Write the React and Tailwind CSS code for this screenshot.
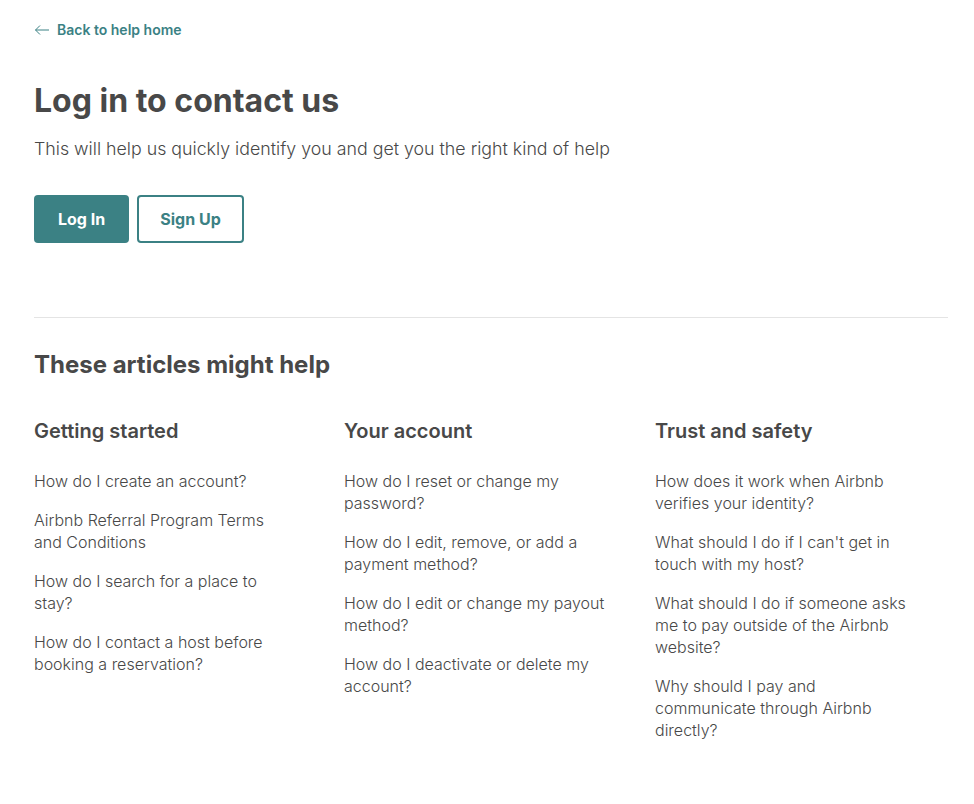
import React from 'react';

const columns = [
  {
    title: 'Getting started',
    links: [
      'How do I create an account?',
      'Airbnb Referral Program Terms and Conditions',
      'How do I search for a place to stay?',
      'How do I contact a host before booking a reservation?',
    ],
  },
  {
    title: 'Your account',
    links: [
      'How do I reset or change my password?',
      'How do I edit, remove, or add a payment method?',
      'How do I edit or change my payout method?',
      'How do I deactivate or delete my account?',
    ],
  },
  {
    title: 'Trust and safety',
    links: [
      'How does it work when Airbnb verifies your identity?',
      "What should I do if I can't get in touch with my host?",
      'What should I do if someone asks me to pay outside of the Airbnb website?',
      'Why should I pay and communicate through Airbnb directly?',
    ],
  },
];

const ArrowLeft = () => (
  <svg width="16" height="12" viewBox="0 0 16 12" fill="none" stroke="currentColor" strokeWidth="1">
    <path d="M15 6H1.5M6 1.5L1.5 6L6 10.5" />
  </svg>
);

export default function App() {
  return (
    <div
      className="min-h-screen bg-white text-[#484848] pl-[34px] pr-[26px] pt-[20px] pb-10"
      style={{ fontFamily: 'Inter, "Open Sans", sans-serif' }}
    >
      {/* back link */}
      <a href="#" className="flex items-center gap-[7px] text-[14px] leading-[20px] font-semibold text-[#3b8184]">
        <ArrowLeft />
        Back to help home
      </a>

      <h1 className="mt-[41px] text-[32px] leading-[40px] font-bold">Log in to contact us</h1>
      <p className="mt-[16px] text-[17.8px] leading-[24px] font-light">
        This will help us quickly identify you and get you the right kind of help
      </p>

      <div className="mt-[34px] flex gap-[8px]">
        <button className="h-[48px] w-[95px] rounded-[4px] bg-[#3b8184] text-white text-[16px] font-bold">
          Log In
        </button>
        <button className="h-[48px] w-[107px] rounded-[4px] border-2 border-[#3b8184] bg-white text-[#3b8184] text-[16px] font-bold">
          Sign Up
        </button>
      </div>

      <hr className="mt-[74px] border-t border-[#e4e4e4]" />

      <h2 className="mt-[32px] text-[24px] leading-[30px] font-bold">These articles might help</h2>

      <div className="mt-[38px] grid grid-cols-[310px_311px_1fr]">
        {columns.map((col) => (
          <div key={col.title}>
            <h3 className="text-[20px] leading-[26px] font-semibold">{col.title}</h3>
            <ul className="mt-[26px] flex flex-col gap-[17px] w-[262px]">
              {col.links.map((l) => (
                <li key={l} className="text-[16px] leading-[22px] font-light">
                  <a href="#">{l}</a>
                </li>
              ))}
            </ul>
          </div>
        ))}
      </div>
    </div>
  );
}
